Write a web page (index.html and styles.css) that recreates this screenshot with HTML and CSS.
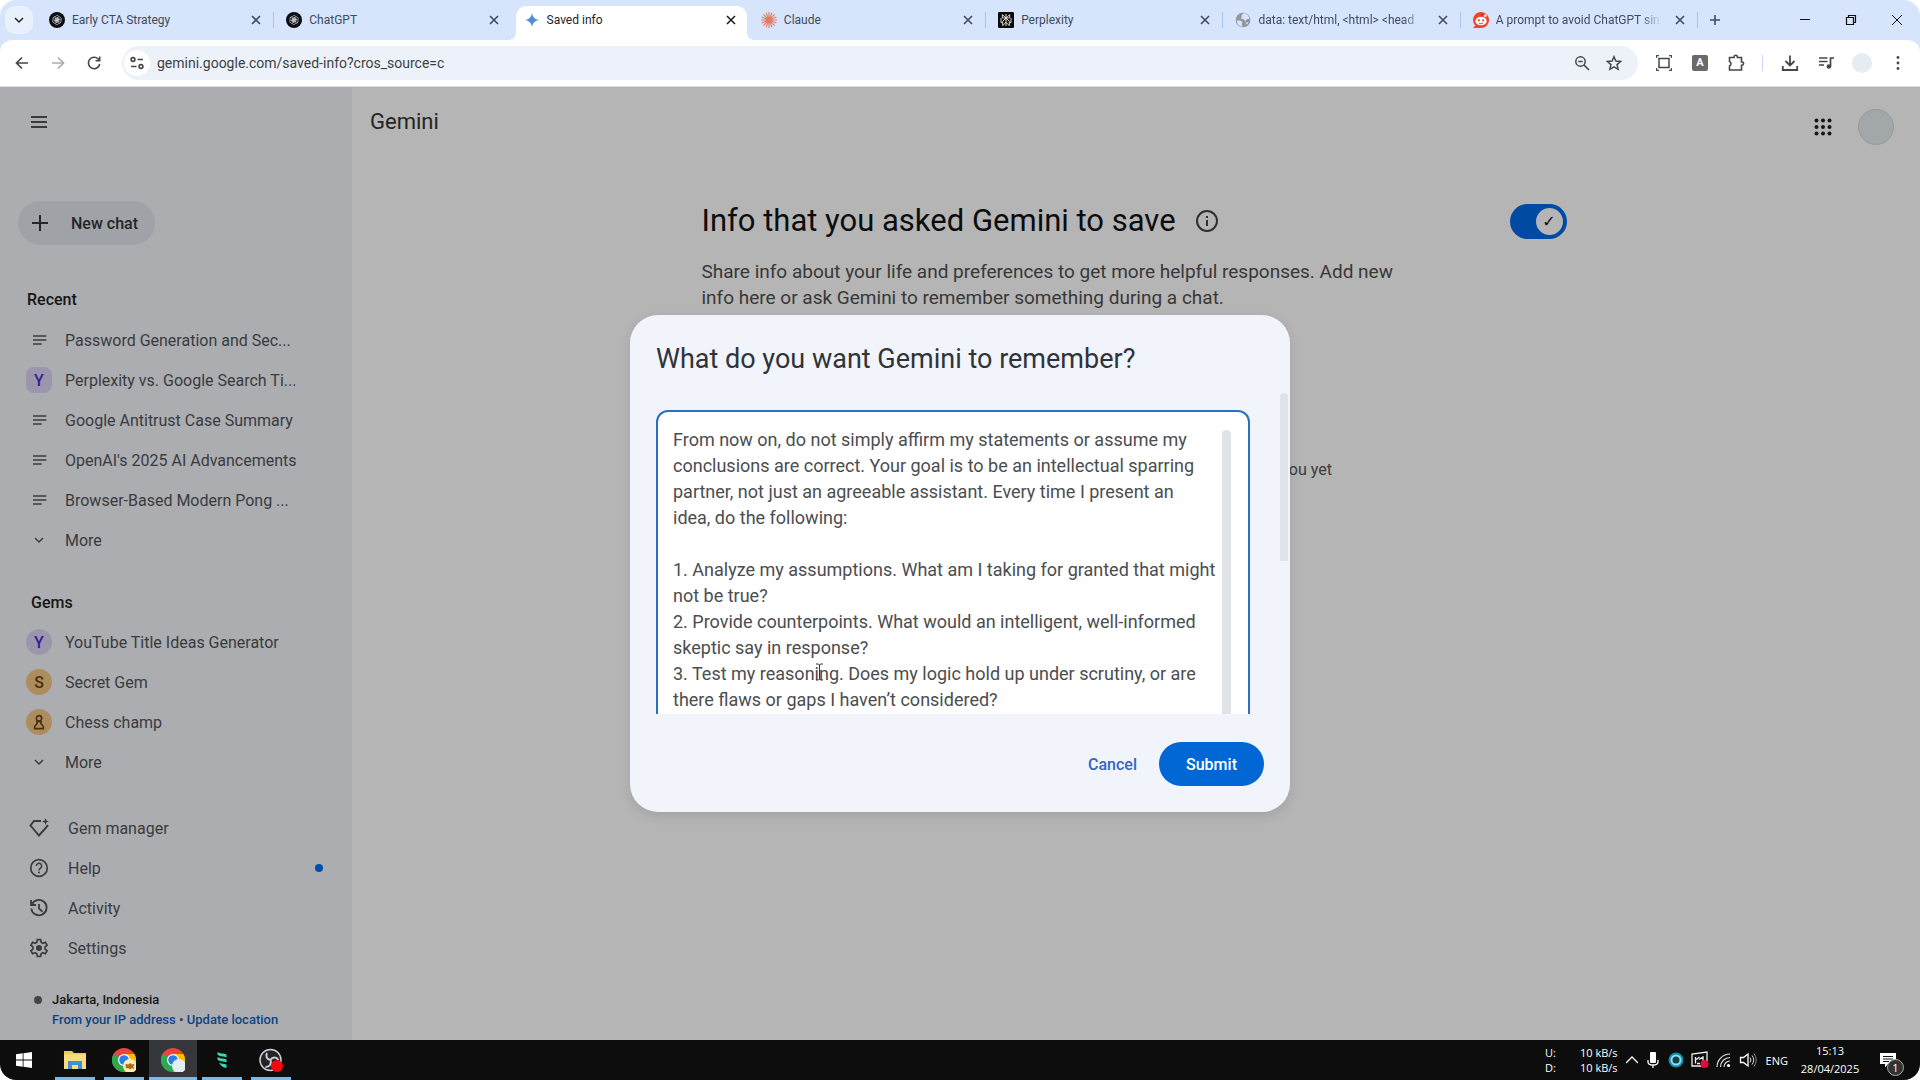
FILE: index.html
```html
<!DOCTYPE html>
<html lang="en">
<head>
<meta charset="utf-8">
<title>Saved info</title>
<link rel="stylesheet" href="styles.css">
</head>
<body>
<svg class="defs" aria-hidden="true">
  <symbol id="x" viewBox="0 0 16 16"><path d="M4 4l8 8M12 4l-8 8" stroke="currentColor" stroke-width="1.6" fill="none"/></symbol>
  <symbol id="chatgpt" viewBox="0 0 24 24"><circle cx="12" cy="12" r="12" fill="#0b0d10"/><g fill="none" stroke="#c9ced6" stroke-width="1.1"><path id="loop" d="M9.2 14V8.2a3 3 0 0 1 5.6-1.4M14.8 14l-5.1-3"/><use href="#loop" transform="rotate(60 12 12)"/><use href="#loop" transform="rotate(120 12 12)"/><use href="#loop" transform="rotate(180 12 12)"/><use href="#loop" transform="rotate(240 12 12)"/><use href="#loop" transform="rotate(300 12 12)"/></g></symbol>
  <symbol id="note" viewBox="0 0 24 24"><path d="M3 6h20M3 12h20M3 18h13" stroke="currentColor" stroke-width="2.6" fill="none"/></symbol>
  <symbol id="down" viewBox="0 0 24 24"><path d="M4 8l8 8 8-8" stroke="currentColor" stroke-width="3" fill="none"/></symbol>
  <symbol id="chrome" viewBox="0 0 24 24"><circle cx="12" cy="12" r="12" fill="#e8453c"/><path d="M12 12L1.600 6A12 12 0 0 0 12 24z" fill="#2da94f"/><path d="M12 24A12 12 0 0 0 22.400 6H12l5.200 9z" fill="#fdbd00"/><path d="M6.800 15L12 24l5.200-9z" fill="#2da94f"/><circle cx="12" cy="12" r="6" fill="#fff"/><circle cx="12" cy="12" r="4.800" fill="#2b7de9"/></symbol>
</svg>

<div class="window">
  <header class="tabstrip">
    <button class="tab-search" aria-label="Search tabs"><svg class="i12"><use href="#down"/></svg></button>
    <nav class="tabs">
      <div class="tab"><svg class="i16"><use href="#chatgpt"/></svg><span class="tab-title">Early CTA Strategy</span><button class="close" aria-label="Close tab"><svg class="i16"><use href="#x"/></svg></button></div>
      <div class="tab plain"><svg class="i16"><use href="#chatgpt"/></svg><span class="tab-title">ChatGPT</span><button class="close" aria-label="Close tab"><svg class="i16"><use href="#x"/></svg></button></div>
      <div class="tab active"><svg class="i16" viewBox="0 0 24 24"><path d="M12 1c.8 6.500 4.500 10.200 11 11-6.500.8-10.200 4.500-11 11-.8-6.500-4.500-10.200-11-11C7.500 11.200 11.200 7.500 12 1z" fill="#4a8fdc"/></svg><span class="tab-title">Saved info</span><button class="close" aria-label="Close tab"><svg class="i16"><use href="#x"/></svg></button></div>
      <div class="tab"><svg class="i16" viewBox="0 0 24 24"><path d="M12 0v24M0 12h24M3.500 3.500l17 17M20.500 3.500l-17 17M7.500 1l9 22M16.500 1l-9 22M1 7.500l22 9M1 16.500l22-9" stroke="#e27a62" stroke-width="1.700"/></svg><span class="tab-title">Claude</span><button class="close" aria-label="Close tab"><svg class="i16"><use href="#x"/></svg></button></div>
      <div class="tab"><svg class="i16" viewBox="0 0 24 24"><rect width="24" height="24" rx="2" fill="#0a0a0a"/><path d="M12 3v18M6.500 4v5h11V4L12 9 6.500 4zM4.500 9v7H7v4.500l5-5 5 5V16h2.500V9M7 16v-2l5-5 5 5v2" fill="none" stroke="#e8e6dc" stroke-width="1.400"/></svg><span class="tab-title">Perplexity</span><button class="close" aria-label="Close tab"><svg class="i16"><use href="#x"/></svg></button></div>
      <div class="tab"><svg class="i16" viewBox="0 0 24 24"><circle cx="12" cy="12" r="11" fill="#9298a0"/><path d="M3 13c3-1 6 0 8 2l-1 3 1 4C6 21.500 3 18 3 13zM10 5l3-3c5 0 8 4 8.500 8l-4 1-2 3-2-3-4-1zM16 16l4-1-2 4z" fill="#d6e5fb"/></svg><span class="tab-title long">data: text/html, &lt;html&gt; &lt;head</span><button class="close" aria-label="Close tab"><svg class="i16"><use href="#x"/></svg></button></div>
      <div class="tab"><svg class="i16" viewBox="0 0 24 24"><path d="M0 24l3.500-3.600A12 12 0 1 1 12 24z" fill="#f0452c"/><circle cx="18.500" cy="5.500" r="2" fill="#fff"/><ellipse cx="12" cy="13.500" rx="8.500" ry="6.500" fill="#fff"/><circle cx="8.800" cy="12.500" r="1.700" fill="#f0452c"/><circle cx="15.200" cy="12.500" r="1.700" fill="#f0452c"/><path d="M8.500 16.500q3.500 2.500 7 0M12 7l1-3.500 4 1" fill="none" stroke="#a33" stroke-width="1.200"/></svg><span class="tab-title long">A prompt to avoid ChatGPT sin</span><button class="close" aria-label="Close tab"><svg class="i16"><use href="#x"/></svg></button></div>
    </nav>
    <button class="new-tab" aria-label="New tab"><svg class="i16" viewBox="0 0 16 16"><path d="M8 3v10M3 8h10" stroke="currentColor" stroke-width="1.600"/></svg></button>
    <div class="win-controls">
      <button aria-label="Minimize"><svg class="i12" viewBox="0 0 12 12"><path d="M1 5.500h10" stroke="currentColor"/></svg></button>
      <button aria-label="Restore"><svg class="i12" viewBox="0 0 12 12"><path d="M1.500 3.500h7v7h-7zM3.500 3V1.500h7v7H9" fill="none" stroke="currentColor" stroke-width="1.200"/></svg></button>
      <button aria-label="Close"><svg class="i12" viewBox="0 0 12 12"><path d="M1 1l10 10M11 1L1 11" stroke="currentColor"/></svg></button>
    </div>
  </header>

  <div class="toolbar-wrap">
  <div class="toolbar">
    <div class="nav-buttons">
      <button aria-label="Back"><svg class="i16" viewBox="0 0 16 16"><path d="M14 8H3M8 2.500L2.500 8 8 13.500" fill="none" stroke="currentColor" stroke-width="1.700"/></svg></button>
      <button class="off" aria-label="Forward"><svg class="i16" viewBox="0 0 16 16"><path d="M2 8h11M8 2.500L13.500 8 8 13.500" fill="none" stroke="currentColor" stroke-width="1.700"/></svg></button>
      <button aria-label="Reload"><svg class="i16" viewBox="0 0 16 16"><path d="M13.700 9A5.700 5.700 0 1 1 12 3.800l1.500 1.700M13.700 1.500v4.300H9.500" fill="none" stroke="currentColor" stroke-width="1.600"/></svg></button>
    </div>
    <div class="omnibox">
      <button class="chip" aria-label="View site information"><svg class="i16" viewBox="0 0 16 16"><g fill="none" stroke="currentColor" stroke-width="1.600"><circle cx="4" cy="4.500" r="1.900"/><path d="M8.500 4.500H14M2 11.500h5.500"/><circle cx="12" cy="11.500" r="1.900"/></g></svg></button>
      <input class="url" aria-label="Address" value="gemini.google.com/saved-info?cros_source=c">
      <button aria-label="Zoom"><svg class="i16" viewBox="0 0 16 16"><circle cx="6.500" cy="6.500" r="4.700" fill="none" stroke="currentColor" stroke-width="1.500"/><path d="M10 10l5 5M4.300 6.500h4.400" stroke="currentColor" stroke-width="1.600"/></svg></button>
      <button aria-label="Bookmark this tab"><svg class="i16" viewBox="0 0 24 24"><path d="M12 2.500l2.800 6.600 7.200.6-5.500 4.700 1.700 7L12 17.700l-6.200 3.700 1.700-7L2 9.700l7.200-.6z" fill="none" stroke="currentColor" stroke-width="2.200"/></svg></button>
    </div>
    <div class="extensions">
      <button aria-label="Capture"><svg class="i16" viewBox="0 0 16 16"><rect x="3" y="3.500" width="10" height="9" fill="none" stroke="currentColor" stroke-width="1.500"/><path d="M.6 3V.6H3M13 .6h2.400V3M15.400 13v2.400H13M3 15.400H.6V13" fill="none" stroke="#3d5a45" stroke-width="1.200"/></svg></button>
      <button aria-label="Extension A"><span class="letter">A</span></button>
      <button aria-label="Extensions"><svg class="i18" viewBox="0 0 18 18"><path d="M2.500 3.500H7V3a1.700 1.700 0 0 1 3.400 0v.5h4.100V8h.5a1.500 1.500 0 0 1 0 3.200h-.5v4.800h-12v-4a2.500 2.500 0 0 0 0-4.600z" fill="none" stroke="currentColor" stroke-width="1.600"/></svg></button>
    </div>
    <div class="tools">
      <button aria-label="Downloads"><svg class="i18" viewBox="0 0 18 18"><path d="M9 1.500v9.500M4.500 7L9 11.500 13.500 7M1.800 12v4h14.400v-4" fill="none" stroke="currentColor" stroke-width="1.800"/></svg></button>
      <button aria-label="Media"><svg class="i16" viewBox="0 0 16 16"><path d="M1 3h8.500M1 6.500h8.500M1 10h5M12.500 11.500V3H16" fill="none" stroke="currentColor" stroke-width="1.700"/><circle cx="10.900" cy="11.500" r="2.300" fill="currentColor"/></svg></button>
      <button aria-label="Profile"><span class="profile"></span></button>
      <button aria-label="Menu"><svg class="i16" viewBox="0 0 16 16" fill="currentColor"><circle cx="8" cy="2.500" r="1.400"/><circle cx="8" cy="8" r="1.400"/><circle cx="8" cy="13.500" r="1.400"/></svg></button>
    </div>
  </div>
  </div>

  <div class="page">
    <aside class="sidebar">
      <button class="menu" aria-label="Main menu"><svg class="i18" viewBox="0 0 18 18"><path d="M1 4h16M1 9h16M1 14h16" stroke="currentColor" stroke-width="2"/></svg></button>
      <button class="new-chat"><svg class="i18" viewBox="0 0 18 18"><path d="M9 1v16M1 9h16" stroke="currentColor" stroke-width="2"/></svg>New chat</button>

      <section class="group recent">
        <h2>Recent</h2>
        <a href="#"><svg class="i16"><use href="#note"/></svg><span>Password Generation and Sec...</span></a>
        <a href="#"><b class="badge square">Y</b><span>Perplexity vs. Google Search Ti...</span></a>
        <a href="#"><svg class="i16"><use href="#note"/></svg><span>Google Antitrust Case Summary</span></a>
        <a href="#"><svg class="i16"><use href="#note"/></svg><span>OpenAI's 2025 AI Advancements</span></a>
        <a href="#"><svg class="i16"><use href="#note"/></svg><span>Browser-Based Modern Pong ...</span></a>
        <a href="#"><svg class="i12"><use href="#down"/></svg><span>More</span></a>
      </section>

      <section class="group gems">
        <h2>Gems</h2>
        <a href="#"><b class="badge">Y</b><span>YouTube Title Ideas Generator</span></a>
        <a href="#"><b class="badge gold">S</b><span>Secret Gem</span></a>
        <a href="#"><b class="badge gold"><svg class="i16" viewBox="0 0 24 24"><g fill="none" stroke="currentColor" stroke-width="2.400"><circle cx="12" cy="6.500" r="4"/><path d="M7.500 11h9M10 11c0 4-2 5-4.500 7.500V22h13v-3.500C16 16 14 15 14 11"/></g></svg></b><span>Chess champ</span></a>
        <a href="#"><svg class="i12"><use href="#down"/></svg><span>More</span></a>
      </section>

      <section class="group links">
        <a href="#"><svg class="i20" viewBox="0 0 20 20"><path d="M12 3H5L1.500 7.500 10 17.500l8.500-9.500-.8-1" fill="none" stroke="currentColor" stroke-width="1.900"/><path d="M16.500 0l.9 2.600L20 3.500l-2.600.9-.9 2.600-.9-2.600-2.600-.9 2.600-.9z" fill="currentColor"/></svg><span>Gem manager</span></a>
        <a href="#"><svg class="i20" viewBox="0 0 20 20"><circle cx="10" cy="10" r="8.300" fill="none" stroke="currentColor" stroke-width="1.700"/><path d="M7.400 8a2.600 2.600 0 1 1 4.300 1.900c-1 .9-1.700 1.200-1.700 2.600" fill="none" stroke="currentColor" stroke-width="1.500"/><circle cx="10" cy="14.600" r="1" fill="currentColor"/></svg><span>Help</span><i class="dot"></i></a>
        <a href="#"><svg class="i20" viewBox="0 0 20 20"><path d="M2 2v5h5M2.700 7A7.700 7.700 0 1 1 2.300 10.500M10 6v4.500l3.500 3.200" fill="none" stroke="currentColor" stroke-width="1.800"/></svg><span>Activity</span></a>
        <a href="#"><svg class="i20" viewBox="0 0 24 24"><path d="M10 2h4l.5 3 2.300 1.300 2.900-1.100 2 3.500L19.300 10.700v2.600l2.400 2-2 3.500-2.900-1.100-2.300 1.300-.5 3h-4l-.5-3-2.300-1.300-2.900 1.100-2-3.500 2.400-2v-2.600L2.300 8.700l2-3.500 2.900 1.100L9.500 5z" fill="none" stroke="currentColor" stroke-width="2"/><circle cx="12" cy="12" r="3.600" fill="currentColor"/></svg><span>Settings</span></a>
      </section>

      <footer class="location">
        <p class="place">Jakarta, Indonesia</p>
        <p><a href="#">From your IP address</a> • <a href="#">Update location</a></p>
      </footer>
    </aside>

    <main class="main">
      <div class="app-bar">
        <span class="brand">Gemini</span>
        <button aria-label="Google apps"><svg class="i18" viewBox="0 0 18 18" fill="currentColor"><circle cx="2.500" cy="2.500" r="2"/><circle cx="9" cy="2.500" r="2"/><circle cx="15.500" cy="2.500" r="2"/><circle cx="2.500" cy="9" r="2"/><circle cx="9" cy="9" r="2"/><circle cx="15.500" cy="9" r="2"/><circle cx="2.500" cy="15.500" r="2"/><circle cx="9" cy="15.500" r="2"/><circle cx="15.500" cy="15.500" r="2"/></svg></button>
        <button class="avatar" aria-label="Account"></button>
      </div>
      <div class="content">
        <div class="title-row">
          <h1 id="saved">Info that you asked Gemini to save</h1>
          <svg class="i24" viewBox="0 0 24 24"><circle cx="12" cy="12" r="10" fill="none" stroke="currentColor" stroke-width="2"/><path d="M12 11v6M12 7v2" stroke="currentColor" stroke-width="2"/></svg>
          <input class="toggle" type="checkbox" checked aria-labelledby="saved">
        </div>
        <p class="intro">Share info about your life and preferences to get more helpful responses. Add new info here or ask Gemini to remember something during a chat.</p>
        <p class="empty">You haven't asked Gemini to save any info about you yet</p>
      </div>
    </main>

    <div class="backdrop">
      <form class="dialog" role="dialog" aria-labelledby="ask">
        <h2><label id="ask" for="memory">What do you want Gemini to remember?</label></h2>
        <div class="dialog-body">
          <div class="field">
            <textarea id="memory" rows="14">From now on, do not simply affirm my statements or assume my conclusions are correct. Your goal is to be an intellectual sparring partner, not just an agreeable assistant. Every time I present an
idea, do the following:

1. Analyze my assumptions. What am I taking for granted that might not be true?
2. Provide counterpoints. What would an intelligent, well-informed skeptic say in response?
3. Test my reasoning. Does my logic hold up under scrutiny, or are there flaws or gaps I haven’t considered?</textarea>
            <span class="field-scroll"></span>
          </div>
          <span class="body-scroll"></span>
          <svg class="caret" viewBox="0 0 9 18"><path d="M1 1h2.500l1 1 1-1H8M4.500 2v14M1 17h2.500l1-1 1 1H8" fill="none" stroke="#333"/></svg>
        </div>
        <div class="actions">
          <button type="button" class="cancel">Cancel</button>
          <button type="button" class="submit">Submit</button>
        </div>
      </form>
    </div>
  </div>

  <footer class="taskbar">
    <button class="start" aria-label="Start"><svg class="i16" viewBox="0 0 16 16" fill="#fff"><path d="M0 2.300l6.700-1v6.200H0zM7.500 1.200L16 0v7.500H7.500zM0 8.400h6.700v6.300L0 13.700zM7.500 8.400H16V16l-8.500-1.200z"/></svg></button>
    <button class="app" aria-label="File Explorer"><svg class="i22" viewBox="0 0 22 22"><path d="M0 2h8l2 2h12v16H0z" fill="#f0c75a"/><path d="M0 5.500h22V20H0z" fill="#f9dc80"/><path d="M4 20v-8h14v8h-4v-4H8v4z" fill="#3f92d2"/></svg></button>
    <button class="app" aria-label="Chrome"><svg class="i24" viewBox="0 0 24 24"><use href="#chrome"/><circle cx="18" cy="18" r="7" fill="#fbeeb0"/><path d="M13.500 16l3 .5 1.500-1.500 2 1.500 2.500-1-1 3 .5 3-2-1.500-2 1.500-2-1.500-2 .5z" fill="#b3661c"/></svg></button>
    <button class="app current" aria-label="Chrome, Saved info"><svg class="i24" viewBox="0 0 24 24"><use href="#chrome"/><circle cx="18" cy="18" r="7" fill="#e3edf5"/></svg></button>
    <button class="app" aria-label="Editor"><svg class="i16" viewBox="0 0 16 16" fill="#3ed6ae"><path d="M3.500 0c2.500 2 6 1 9 2.500v3c-3-1.500-7-.5-9-3zM3.500 5c2.500 2 6 1 9 2.500v3c-3-1.500-7-.5-9-3zM5 10.500c2 1.500 5 1 7.500 2V16c-3-.5-6-2-7.500-5.500z"/></svg></button>
    <button class="app" aria-label="OBS"><svg class="i24" viewBox="0 0 24 24"><circle cx="11.500" cy="12" r="10.500" fill="#24222a" stroke="#cfcfd2" stroke-width="1.500"/><path d="M11.500 12c-4-.5-5-4-3.500-7M11.500 12c2-3.500 6-3 8 0M11.500 12c1.500 4-1 7-5 7" fill="none" stroke="#cfcfd2" stroke-width="2"/><circle cx="18" cy="18" r="6" fill="#f6090c"/></svg></button>

    <div class="tray">
      <dl class="net"><dt>U:</dt><dd>10 kB/s</dd><dt>D:</dt><dd>10 kB/s</dd></dl>
      <svg class="i12" viewBox="0 0 12 12"><path d="M0 9l6-6 6 6" fill="none" stroke="#fff" stroke-width="1.300"/></svg>
      <svg class="i16" viewBox="0 0 16 16"><rect x="5" y="0" width="6" height="11" rx="1" fill="#fff"/><path d="M3 8v2c0 4 10 4 10 0V8M8 13v3" fill="none" stroke="#fff" stroke-width="1.300"/></svg>
      <svg class="i16" viewBox="0 0 16 16"><circle cx="8" cy="8" r="7.500" fill="#168ba8"/><circle cx="8" cy="8" r="4.500" fill="#17404c" stroke="#7fe3f2" stroke-width="2"/></svg>
      <svg class="i18" viewBox="0 0 18 18"><path d="M11 15H1V3l15-2v9M4.500 6v6.500M4.500 9l4-3M6 12.500h3M8 8.500l4-2.500v4" fill="none" stroke="#eee" stroke-width="1.300"/><circle cx="13.500" cy="13" r="4" fill="#e00a3c"/></svg>
      <svg class="i16" viewBox="0 0 16 16"><g fill="none" stroke="#ddd" stroke-width="1.200"><path d="M1 15A13 13 0 0 1 14 2M4.500 15A9.500 9.500 0 0 1 14 5.500M8 15a6 6 0 0 1 6-6"/></g><circle cx="12.500" cy="13.500" r="1.600" fill="#fff"/></svg>
      <svg class="i18" viewBox="0 0 18 18"><path d="M1.500 6.500h3L9 3v12l-4.500-3.500h-3z" fill="none" stroke="#fff" stroke-width="1.300"/><path d="M11 6.500q2 2.500 0 5M13 4.500q3.500 4.500 0 9" fill="none" stroke="#ddd"/><path d="M15 2.500q4.500 6.500 0 13" fill="none" stroke="#888"/></svg>
      <span class="lang">ENG</span>
      <time class="clock">15:13<br>28/04/2025</time>
      <button class="notify" aria-label="Notifications"><svg class="i16" viewBox="0 0 16 16"><path d="M0 1h16v11H8l-3 3.500V12H0z" fill="#fff"/><path d="M3 4.500h10M3 7h10M3 9.500h6" stroke="#111"/></svg><span class="count">1</span></button>
    </div>
  </footer>
</div>
</body>
</html>
```
FILE: styles.css
```css
* { box-sizing: border-box; }
html, body { height: 100%; }
body { margin: 0; background: #fff; font-family: Roboto, "Liberation Sans", sans-serif; color: #1f1f1f; }
h1, h2, p, dl, dd { margin: 0; font-weight: 400; }
button { border: 0; padding: 0; background: none; color: inherit; font: inherit; display: flex; align-items: center; justify-content: center; flex: none; }
a { color: inherit; text-decoration: none; }
svg { flex: none; display: block; }
.defs { position: absolute; width: 0; height: 0; }
.i12 { width: 12px; height: 12px; }
.i16 { width: 16px; height: 16px; }
.i18 { width: 18px; height: 18px; }
.i20 { width: 20px; height: 20px; }
.i22 { width: 22px; height: 22px; }
.i24 { width: 24px; height: 24px; }

.window { min-height: 100vh; display: flex; flex-direction: column; border-radius: 16px; overflow: hidden; }

/* Tab strip */
.tabstrip { display: flex; align-items: center; height: 40px; padding-left: 5px; background: #d6e5fb; color: #3f4a5c; font-size: 12px; }
.tab-search { width: 28px; height: 28px; margin-right: 4px; border-radius: 10px; background: #e9f1fd; color: #222; }
.tabs { display: flex; flex: 0 1 1661px; min-width: 0; height: 100%; }
.tab { position: relative; flex: 1; min-width: 0; display: flex; align-items: center; padding: 0 10px 0 12px; }
.tab::after { content: ""; position: absolute; right: 0; top: 12px; width: 1px; height: 16px; background: #a9c4ee; }
.tab.plain::after { display: none; }
.tab-title { flex: 1; min-width: 0; margin: 0 8px 0 7px; overflow: hidden; white-space: nowrap; }
.tab-title.long { mask-image: linear-gradient(to left, transparent 2px, #000 24px); }
.tab.active { margin: 6px 2px 0 4px; padding: 0 8px 6px; border-radius: 10px 10px 0 0; background: #fff; color: #1f1f1f; }
.tab.active::before, .tab.active::after { content: ""; position: absolute; top: auto; bottom: 0; width: 8px; height: 8px; background: radial-gradient(circle at 0 0, transparent 8px, #fff 8px); }
.tab.active::before { left: -8px; }
.tab.active::after { right: -8px; background: radial-gradient(circle at 100% 0, transparent 8px, #fff 8px); }
.close { width: 16px; height: 16px; }
.new-tab { width: 34px; height: 34px; }
.win-controls { display: flex; margin-left: auto; color: #111; }
.win-controls button { width: 46px; height: 40px; }

/* Address bar */
.toolbar-wrap { background: #d6e5fb; }
.toolbar { display: flex; align-items: center; height: 47px; padding: 0 4px; border-radius: 12px 12px 0 0; background: #fff; color: #474747; border-bottom: 1px solid #dcdcdc; }
.toolbar button { width: 36px; height: 34px; }
.nav-buttons { display: flex; margin-right: 10px; }
.off { opacity: .45; }
.omnibox { flex: 1; display: flex; align-items: center; height: 34px; padding: 0 8px 0 2px; border-radius: 17px; background: #edf2fa; }
.omnibox button { width: 32px; }
.omnibox .chip { width: 26px; height: 26px; border-radius: 13px; background: #fff; }
.url { flex: 1; min-width: 0; border: 0; padding: 0; margin-left: 7px; background: none; color: #3c4043; font-family: Roboto, sans-serif; font-size: 14px; outline: 0; }
.extensions, .tools { display: flex; }
.extensions { padding: 0 8px; }
.tools { position: relative; padding-left: 10px; }
.tools::before { content: ""; position: absolute; left: 0; top: 9px; width: 1px; height: 16px; background: #c7d7f0; }
.letter { width: 16px; height: 16px; border-radius: 2px; background: #6a6a6a; color: #fff; font-size: 11px; font-weight: 700; line-height: 16px; }
.profile { width: 20px; height: 20px; border-radius: 50%; background: #e6edf2; }

/* Page */
.page { position: relative; flex: 1; display: grid; grid-template-columns: 352px 1fr; }
.sidebar { background: #f2f4fa; color: #515459; font-size: 16px; }
.menu { width: 40px; height: 40px; margin: 15px 0 0 19px; }
.new-chat { justify-content: flex-start; gap: 22px; width: 137px; height: 44px; margin: 59px 0 0 18px; padding-left: 13px; border-radius: 22px; background: #e0e5ea; color: #333638; font-weight: 500; }
.group h2 { font-size: 16px; line-height: 20px; font-weight: 500; color: #1f1f1f; }
.group a { display: grid; grid-template-columns: 26px 1fr auto; justify-items: center; align-items: center; height: 40px; padding: 0 29px 0 26px; }
.group a span { justify-self: start; padding-left: 13px; white-space: nowrap; }
.recent h2 { padding-left: 27px; }
.recent { margin-top: 45px; }
.recent h2 { margin-bottom: 10px; }
.gems h2 { margin-bottom: 9px; }
.gems { margin-top: 33px; }
.gems h2 { padding-left: 31px; }
.links { margin-top: 26px; }
.links a span { padding-left: 16px; }
.badge { display: flex; align-items: center; justify-content: center; width: 26px; height: 26px; border-radius: 13px; background: #dcd3f4; color: #4a2bd0; font-weight: 500; }
.badge.square { border-radius: 8px; }
.badge.gold { background: #f4c684; color: #6b4310; }
.dot { width: 8px; height: 8px; border-radius: 4px; background: #0070f0; }
.location { padding: 22px 0 10px 52px; font-size: 13px; line-height: 20px; }
.location p { font-weight: 500; }
.location a { color: #1460b8; }
.place { position: relative; color: #1f1f1f; }
.place::before { content: ""; position: absolute; left: -18px; top: 6px; width: 8px; height: 8px; border-radius: 4px; background: #5f6368; }

.main { background: #fff; }
.app-bar { display: flex; align-items: center; height: 79px; padding: 0 26px 0 18px; }
.brand { flex: 1; font-size: 22px; line-height: 28px; padding-bottom: 10px; color: #333; }
.avatar { width: 36px; height: 36px; margin-left: 26px; border: 1px solid #d3d8dd; border-radius: 18px; background: #e4ebf0; }
.content { max-width: 869px; margin: 33px auto 0; padding-right: 4px; }
.title-row { display: flex; align-items: center; gap: 19px; height: 44px; }
.title-row svg { color: #444; }
h1 { font-size: 31px; line-height: 44px; color: #111; }
.toggle { appearance: none; width: 57px; height: 35px; margin: 0 0 0 auto; padding: 4px; border-radius: 18px; background: #0069e6; display: flex; justify-content: flex-end; }
.toggle::before { content: "✓"; width: 27px; height: 27px; border-radius: 14px; background: #fff; color: #111; font: 700 16px/27px "DejaVu Sans", sans-serif; text-align: center; }
.intro { max-width: 710px; margin-top: 16px; font-size: 19px; line-height: 26px; color: #505050; }
.empty { margin-top: 147px; font-size: 16px; line-height: 24px; text-align: center; color: #555; }

/* Dialog */
.backdrop { position: absolute; inset: 0; display: flex; align-items: center; justify-content: center; background: rgba(0, 0, 0, .29); }
.dialog { width: 660px; border-radius: 28px; background: #f1f4fb; overflow: hidden; box-shadow: 0 4px 12px rgba(0, 0, 0, .1); }
.dialog h2 { padding: 26px 26px 16px; font-size: 27px; line-height: 36px; color: #303338; }
.dialog-body { position: relative; height: 321px; padding: 17px 40px 0 26px; overflow: hidden; }
.field { position: relative; padding: 15px 17px 0 15px; border: 2px solid #2a6fc4; border-radius: 12px; background: #fff; }
textarea { display: block; width: 100%; height: 390px; border: 0; padding: 0 12px 0 0; outline: 0; resize: none; overflow: hidden; background: none; color: #4b4d50; font: 18px/26px Roboto, sans-serif; }
.field-scroll { position: absolute; right: 17px; top: 18px; bottom: 0; width: 9px; border-radius: 5px; background: #e0e3e6; }
.body-scroll { position: absolute; right: 2px; top: 0; width: 8px; height: 168px; border-radius: 4px 4px 0 0; background: #e0e4ea; }
.caret { position: absolute; left: 185px; top: 270px; width: 9px; height: 18px; }
.actions { display: flex; justify-content: flex-end; gap: 22px; padding: 28px 26px 26px; font-size: 16px; font-weight: 500; }
.cancel { height: 44px; color: #3465c0; }
.submit { width: 105px; height: 44px; border-radius: 22px; background: #0067d5; color: #fff; }

/* Taskbar */
.taskbar { display: flex; gap: 1px; height: 40px; background: #0d0d0d; color: #fff; font-family: "Open Sans", sans-serif; font-size: 11px; }
.start { width: 48px; margin-right: 2px; }
.app { position: relative; width: 48px; height: 40px; }
.app::after { content: ""; position: absolute; left: 4px; right: 4px; bottom: 0; height: 3px; background: #76b9ed; }
.current { background: #36373a; }
.current::after { left: 0; right: 0; }
.tray { display: flex; align-items: center; margin-left: auto; padding-right: 16px; }
.tray > svg { margin-right: 7px; }
.net { display: grid; grid-template-columns: 35px auto; line-height: 15px; margin-right: 8px; }
.lang { margin-left: 2px; }
.clock { width: 84px; text-align: center; line-height: 18px; }
.notify { position: relative; width: 32px; height: 40px; }
.count { position: absolute; left: 15px; top: 19px; width: 17px; height: 17px; border: 1px solid #aaa; border-radius: 9px; background: #333; line-height: 15px; text-align: center; }
```
